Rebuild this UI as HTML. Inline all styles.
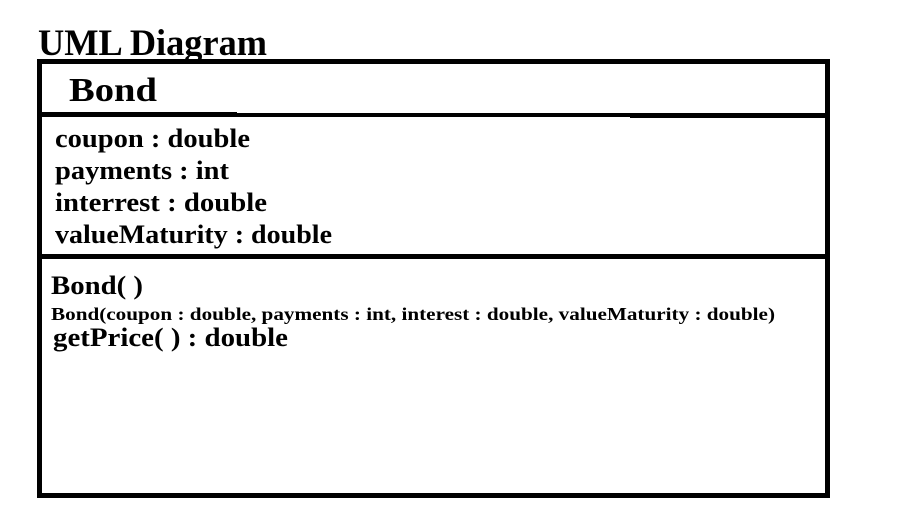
<!DOCTYPE html>
<html><head><style>
html,body{margin:0;padding:0;background:#fff;width:915px;height:512px;overflow:hidden}
svg{display:block}
text{font-family:"Liberation Serif",serif;font-weight:bold;fill:#000}
</style></head><body>
<svg width="915" height="512" viewBox="0 0 915 512">
<rect x="0" y="0" width="915" height="512" fill="#fff"/>
<text x="38" y="55" font-size="37" textLength="229" lengthAdjust="spacingAndGlyphs">UML Diagram</text>
<rect x="37" y="59" width="793" height="5" fill="#000"/>
<rect x="37" y="59" width="5" height="439" fill="#000"/>
<rect x="825" y="59" width="5" height="439" fill="#000"/>
<rect x="37" y="493" width="793" height="5" fill="#000"/>
<rect x="37" y="112" width="200" height="5" fill="#000"/>
<rect x="237" y="113" width="393" height="4" fill="#000"/>
<rect x="630" y="113" width="200" height="5" fill="#000"/>
<rect x="37" y="254" width="793" height="5" fill="#000"/>
<text x="69" y="101" font-size="34" textLength="88" lengthAdjust="spacingAndGlyphs">Bond</text>
<text x="55" y="147" font-size="26" textLength="195" lengthAdjust="spacingAndGlyphs">coupon : double</text>
<text x="55" y="179" font-size="26" textLength="174" lengthAdjust="spacingAndGlyphs">payments : int</text>
<text x="55" y="211" font-size="26" textLength="212" lengthAdjust="spacingAndGlyphs">interrest : double</text>
<text x="55" y="243" font-size="26" textLength="277" lengthAdjust="spacingAndGlyphs">valueMaturity : double</text>
<text x="51" y="294" font-size="26" textLength="92" lengthAdjust="spacingAndGlyphs">Bond( )</text>
<text x="51" y="320" font-size="18" textLength="724" lengthAdjust="spacingAndGlyphs">Bond(coupon : double, payments : int, interest : double, valueMaturity : double)</text>
<text x="53" y="346" font-size="26" textLength="235" lengthAdjust="spacingAndGlyphs">getPrice( ) : double</text>
</svg>
</body></html>
